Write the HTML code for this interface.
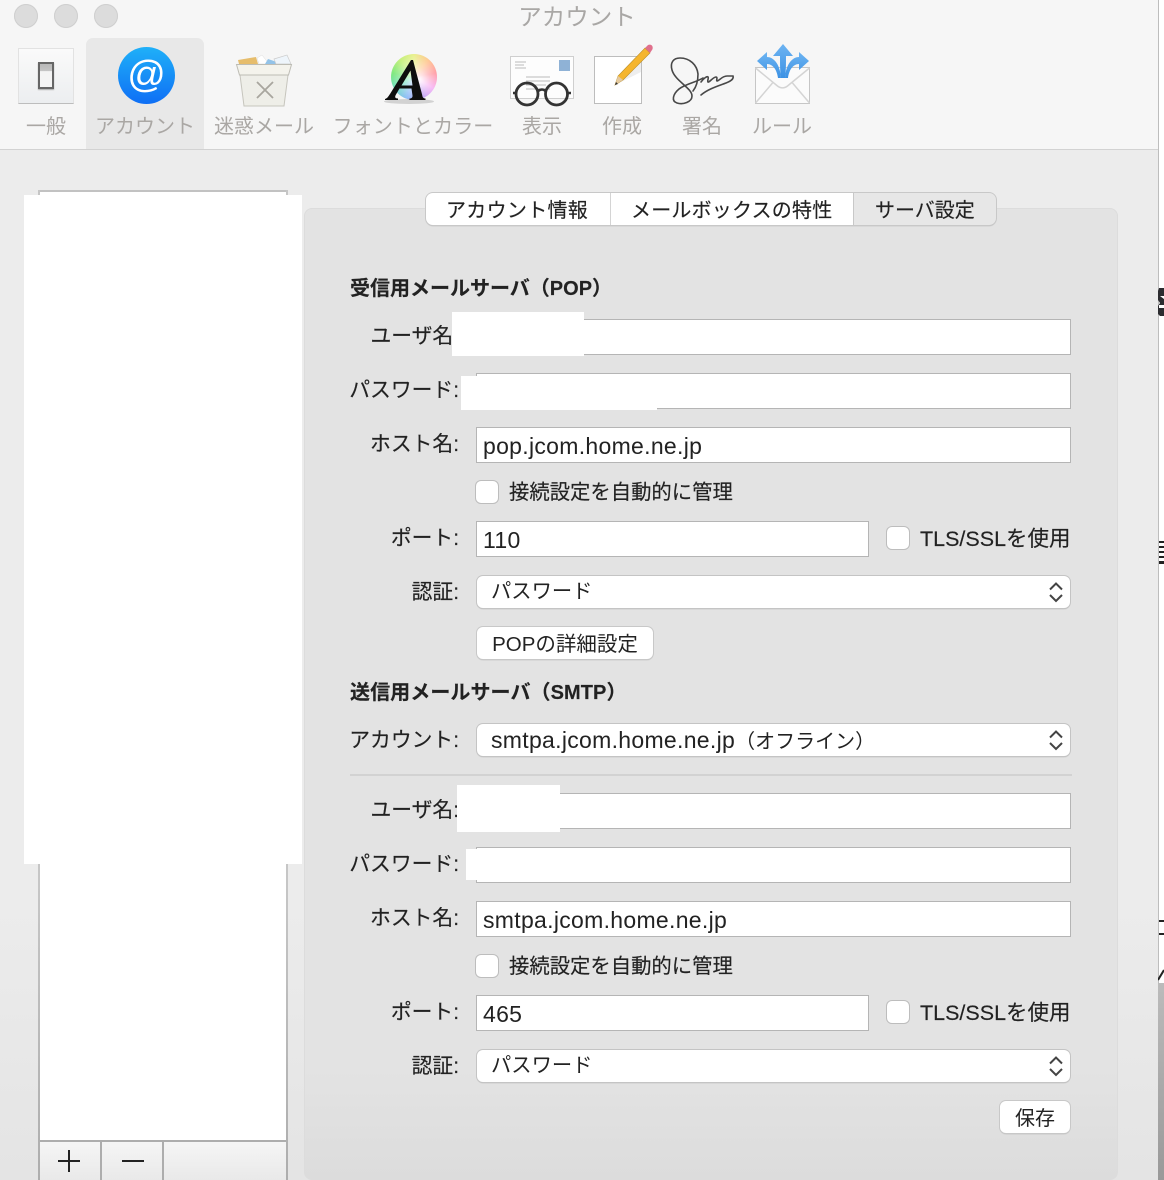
<!DOCTYPE html>
<html lang="ja"><head><meta charset="utf-8"><title>アカウント</title>
<style>
html,body{margin:0;padding:0;width:1164px;height:1180px;overflow:hidden}
body{position:relative;background:#fff;font-family:"Liberation Sans","Noto Sans CJK JP",sans-serif;color:#222}
#page{position:absolute;left:0;top:0;width:1164px;height:1180px;overflow:hidden}
div,svg{position:absolute}
.t{white-space:nowrap;font-size:20px;line-height:30px;height:30px;-webkit-text-stroke:.15px #222}
.r{text-align:right;font-size:20.800px}
.tb{color:#aaa7a4;font-size:20px;line-height:30px;height:30px;white-space:nowrap;text-align:center;top:112px}
.in{background:#fff;border:1px solid #b5b5b5;box-sizing:border-box;height:36px;left:476px;font-size:23px;letter-spacing:.3px;line-height:36px;padding-left:6px;color:#222;white-space:nowrap}
.sel{background:#fff;left:477px;width:593px;height:32px;border-radius:6px;box-shadow:0 0 0 1px #c4c4c4,0 1px 1px #a0a0a0;font-size:20.300px;line-height:33px;padding-left:14px;box-sizing:border-box;white-space:nowrap}
.sel span{font-size:23px;letter-spacing:.3px}
.btn{background:#fff;border-radius:6px;box-shadow:0 0 0 1px #c8c8c8,0 1px 1px #a0a0a0;text-align:center;white-space:nowrap;font-size:20px}
.cb{background:#fff;width:22px;height:22px;border-radius:5px;box-shadow:0 0 0 1px #bdbdbd;left:476px}
.w{background:#fff}
</style></head><body><div id="page">

<!-- window background -->
<div style="left:0;top:0;width:1158px;height:1180px;background:linear-gradient(#ececec 0,#ececec 900px,#e4e4e4 1180px)"></div>
<div style="left:1158px;top:0;width:1px;height:1180px;background:#bdbdbd"></div>
<div style="left:1158px;top:983px;width:6px;height:197px;background:linear-gradient(#bbb,#999)"></div>

<!-- toolbar -->
<div style="left:0;top:0;width:1158px;height:149px;background:#f6f6f6"></div>
<div style="left:0;top:149px;width:1158px;height:1px;background:#d2d2d2"></div>
<div style="left:14px;top:4px;width:24px;height:24px;border-radius:50%;background:#dcdcdc;box-shadow:inset 0 0 0 1px #cfcfcf"></div>
<div style="left:54px;top:4px;width:24px;height:24px;border-radius:50%;background:#dcdcdc;box-shadow:inset 0 0 0 1px #cfcfcf"></div>
<div style="left:94px;top:4px;width:24px;height:24px;border-radius:50%;background:#dcdcdc;box-shadow:inset 0 0 0 1px #cfcfcf"></div>
<div style="left:477px;top:2px;width:200px;text-align:center;font-size:23.500px;color:#a9a7a5;height:30px;line-height:30px;white-space:nowrap">アカウント</div>
<div style="left:86px;top:38px;width:118px;height:111px;background:#e8e8e8;border-radius:7px 7px 0 0"></div>

<!-- general icon -->
<div style="left:18px;top:48px;width:56px;height:56px;box-sizing:border-box;border:1px solid #e2e2e2;border-bottom-color:#bdbdbd;background:linear-gradient(#fafafa,#eceef0)"></div>
<div style="left:38px;top:62px;width:16px;height:27px;box-sizing:border-box;border:2px solid #666;background:linear-gradient(#b8b8b8 0,#c4c4c4 30%,#f4f4f4 32%,#f4f4f4 100%);box-shadow:0 1px 1px #aaa"></div>

<!-- @ icon -->
<div style="left:118px;top:47px;width:57px;height:57px;border-radius:50%;background:linear-gradient(#1fb0f8,#0f6ff5)"></div>
<svg style="left:118px;top:47px" width="57" height="57" viewBox="0 0 57 57"><text x="28.500" y="40" text-anchor="middle" font-family="Liberation Sans" font-size="38" fill="#fff">@</text></svg>

<!-- junk icon -->
<svg style="left:232px;top:50px" width="64" height="60" viewBox="0 0 64 60">
<path d="M6 10l18-3 2 7H7z" fill="#e6bd6c"/>
<path d="M25 8l5-3 7 9H27z" fill="#fff" stroke="#ddd" stroke-width=".5"/>
<path d="M33 14l3-5 9 3-1 2z" fill="#93c3e8"/>
<path d="M42 9l13-4 4 9H44z" fill="#eef5fb" stroke="#ccc" stroke-width=".7"/>
<path d="M8 25h48l-4 31H12z" fill="#eeeee8" stroke="#c6c5bd" stroke-width="1"/>
<path d="M4.500 14.500h55l-3 10.500h-49z" fill="#f4f3ec" stroke="#bdbcb4" stroke-width="1"/>
<path d="M25 32l16 16M41 32L25 48" stroke="#a8a69e" stroke-width="1.800" fill="none"/>
</svg>

<!-- fonts icon -->
<div style="left:391px;top:54px;width:46px;height:46px;border-radius:50%;background:radial-gradient(circle at 60% 55%,#fff 0,rgba(255,255,255,.5) 30%,rgba(255,255,255,0) 70%),conic-gradient(from 0deg,#e8f08a,#ffc080,#ff7f8a,#f59af0,#a78cf5,#7fb4f5,#70e0c0,#80e880,#c4f080,#e8f08a)"></div>
<div style="left:384px;top:99px;width:50px;height:5px;background:#666;border-radius:50%;opacity:.25"></div>
<svg style="left:380px;top:50px" width="60" height="56" viewBox="0 0 60 56"><path d="M5 50h13v-1.500c-3 0-3.500-1.500-2-4l3.500-6h12l1 7c.2 2-1 3-3 3V50h16v-1.500c-2 0-3-1-3.300-3.500L33 10h-2L10 44c-2 3-3 4.500-5 5z M21.500 35.500l9-15 2 15z" fill="#0e0e0e" fill-rule="evenodd"/></svg>

<!-- view icon -->
<div style="left:510px;top:56px;width:64px;height:43px;box-sizing:border-box;border:1px solid #cfcfcf;background:#fdfdfd"></div>
<div style="left:559px;top:60px;width:11px;height:11px;background:#8fb2d6"></div>
<svg style="left:510px;top:56px" width="64" height="40" viewBox="0 0 64 40"><path d="M5 6h11M5 9h9M5 12h11M16 21h24M16 25h24M16 29h20M16 33h24" stroke="#bbb" stroke-width="1" fill="none"/></svg>
<svg style="left:510px;top:78px" width="64" height="30" viewBox="0 0 64 30"><circle cx="17" cy="16" r="11" fill="none" stroke="#333" stroke-width="2.800"/><circle cx="46.500" cy="16" r="11" fill="none" stroke="#333" stroke-width="2.800"/><path d="M28 13c3-2 5-2 7.500 0M3 15H6M58 15h3" fill="none" stroke="#333" stroke-width="2.600"/></svg>

<!-- compose icon -->
<div style="left:594px;top:56px;width:48px;height:48px;box-sizing:border-box;border:1px solid #bdbdbd;background:#fff"></div>
<svg style="left:590px;top:40px" width="70" height="50" viewBox="0 0 70 50"><path d="M25 45l26-13V22z" fill="#eee"/><path d="M25 45l3-9L55 8l5 5-27 27z" fill="#f5b52e" stroke="#b98d26" stroke-width=".6"/><path d="M25 45l3-9 5 4z" fill="#e5caa0"/><path d="M55 8l3-3c2-1 4 0 4.500 1.500.5 1.500 0 3-.5 3.500l-2 3z" fill="#e0708c"/><path d="M25 45l1-3 2 2z" fill="#333"/></svg>

<!-- signature icon -->
<svg style="left:665px;top:52px" width="72" height="56" viewBox="0 0 72 56"><path d="M33 22C32 13 25 6 15 6 8 6 5 11 7 18 10 29 27 36 27 44 27 50 18 53 12 51 6 49 8 42 14 37 20 32 32 30 38 26M33 22c0 6-1 12-5 17M36 30c3-4 6-6 7-5 1 1-1 4 0 5 1 1 5-5 8-5 2 0 0 4 1 4 2 0 5-5 10-5 3 0 5 0 6 0 1 3-2 5-7 7-8 3-18 6-25 12" fill="none" stroke="#484848" stroke-width="1.600" stroke-linecap="round"/></svg>

<!-- rules icon -->
<svg style="left:752px;top:40px" width="62" height="66" viewBox="0 0 62 66">
<defs><linearGradient id="g" x1="0" y1="0" x2="0" y2="1"><stop offset="0" stop-color="#6db4f2"/><stop offset="1" stop-color="#3c92e4"/></linearGradient></defs>
<path d="M3.500 27.500h54v36h-54z" fill="#fbfbfb" stroke="#c6c6c6"/>
<path d="M3.500 28l22 18c3 2.500 7 2.500 10 0l22-18M3.500 63l17-20M57.500 63l-17-20" fill="none" stroke="#d4d4d4" stroke-width="1.500"/>
<path d="M31 4L21 16h7c0 8 0 16 1 22h4c1-6 1-14 1-22h7z" fill="url(#g)"/>
<path d="M5 21l10-9v5c6 0 13 6 14 21h-3c-1-8-5-14-11-14v6z" fill="url(#g)"/>
<path d="M57 21l-10-9v5c-6 0-13 6-14 21h3c1-8 5-14 11-14v6z" fill="url(#g)"/>
</svg>

<div class="tb" style="left:6px;width:80px">一般</div>
<div class="tb" style="left:86px;width:118px">アカウント</div>
<div class="tb" style="left:204px;width:120px">迷惑メール</div>
<div class="tb" style="left:322px;width:182px;letter-spacing:.1px">フォントとカラー</div>
<div class="tb" style="left:502px;width:80px">表示</div>
<div class="tb" style="left:582px;width:80px">作成</div>
<div class="tb" style="left:662px;width:80px">署名</div>
<div class="tb" style="left:742px;width:80px">ルール</div>

<!-- left list -->
<div style="left:38px;top:190px;width:250px;height:990px;box-sizing:border-box;border:2px solid transparent;border-top-color:#c2c2c2;border-bottom:0;background:#fff"></div>
<div style="left:38px;top:190px;width:2px;height:990px;background:linear-gradient(#c6c6c6 0,#c6c6c6 70%,#adadad 100%)"></div>
<div style="left:286px;top:190px;width:2px;height:990px;background:linear-gradient(#c6c6c6 0,#c6c6c6 70%,#adadad 100%)"></div>
<div style="left:40px;top:1140px;width:246px;height:2px;background:#adadad"></div>
<div style="left:40px;top:1142px;width:246px;height:38px;background:linear-gradient(#f5f5f5,#e9e9e9)"></div>
<div style="left:100px;top:1142px;width:2px;height:38px;background:#adadad"></div>
<div style="left:162px;top:1142px;width:2px;height:38px;background:#adadad"></div>
<div style="left:58px;top:1160px;width:22px;height:2px;background:#222"></div>
<div style="left:68px;top:1150px;width:2px;height:22px;background:#222"></div>
<div style="left:122px;top:1160px;width:22px;height:2px;background:#222"></div>
<div class="w" style="left:24px;top:195px;width:278px;height:669px"></div>

<!-- tab panel -->
<div style="left:304px;top:208px;width:814px;height:972px;box-sizing:border-box;border:1px solid #dcdcdc;border-radius:8px;background:linear-gradient(#e3e3e3 0,#e3e3e3 860px,#dcdcdc 972px)"></div>

<!-- tabs -->
<div class="btn" style="left:426px;top:193px;width:428px;height:32px;border-radius:7px 0 0 7px"></div>
<div style="left:854px;top:193px;width:142px;height:32px;background:#e7e7e7;border-radius:0 7px 7px 0;box-shadow:0 0 0 1px #c8c8c8,0 1px 1px #a0a0a0"></div>
<div style="left:610px;top:193px;width:1px;height:32px;background:#d4d4d4"></div>
<div class="t" style="left:446px;top:196px;letter-spacing:.3px">アカウント情報</div>
<div class="t" style="left:631px;top:196px;letter-spacing:.2px">メールボックスの特性</div>
<div class="t" style="left:875px;top:196px">サーバ設定</div>

<!-- POP section -->
<div class="t" style="left:350px;top:274px;font-weight:700">受信用メールサーバ（POP）</div>

<div class="t r" style="left:280px;width:179px;top:322px">ユーザ名:</div>
<div class="in" style="top:319px;width:595px"></div>
<div class="w" style="left:452px;top:312px;width:132px;height:44px"></div>

<div class="t r" style="left:280px;width:179px;top:376px">パスワード:</div>
<div class="in" style="top:373px;width:595px"></div>
<div class="w" style="left:461px;top:376px;width:196px;height:34px"></div>

<div class="t r" style="left:280px;width:179px;top:430px">ホスト名:</div>
<div class="in" style="top:427px;width:595px">pop.jcom.home.ne.jp</div>

<div class="cb" style="top:481px"></div>
<div class="t" style="left:509px;top:478px;font-size:20.350px">接続設定を自動的に管理</div>

<div class="t r" style="left:280px;width:179px;top:524px">ポート:</div>
<div class="in" style="top:521px;width:393px">110</div>
<div class="cb" style="left:887px;top:527px"></div>
<div class="t" style="left:920px;top:524px;font-size:21.500px">TLS/SSLを使用</div>

<div class="t r" style="left:280px;width:179px;top:578px">認証:</div>
<div class="sel" style="top:576px">パスワード</div>
<svg style="left:1048px;top:581px" width="16" height="22" viewBox="0 0 16 22"><path d="M2 8.500L8 2.500l6 6M2 14l6 6 6-6" fill="none" stroke="#444" stroke-width="2"/></svg>

<div class="btn" style="left:477px;top:627px;width:176px;height:32px;line-height:36px;font-size:20.500px">POPの詳細設定</div>

<!-- SMTP section -->
<div class="t" style="left:350px;top:678px;font-weight:700;letter-spacing:.08px">送信用メールサーバ（SMTP）</div>

<div class="t r" style="left:280px;width:179px;top:726px">アカウント:</div>
<div class="sel" style="top:724px;font-size:20px"><span>smtpa.jcom.home.ne.jp</span>（オフライン）</div>
<svg style="left:1048px;top:729px" width="16" height="22" viewBox="0 0 16 22"><path d="M2 8.500L8 2.500l6 6M2 14l6 6 6-6" fill="none" stroke="#444" stroke-width="2"/></svg>

<div style="left:350px;top:774px;width:722px;height:2px;background:#d2d2d2"></div>

<div class="t r" style="left:280px;width:179px;top:796px">ユーザ名:</div>
<div class="in" style="top:793px;width:595px"></div>
<div class="w" style="left:457px;top:785px;width:103px;height:47px"></div>

<div class="t r" style="left:280px;width:179px;top:850px">パスワード:</div>
<div class="in" style="top:847px;width:595px"></div>
<div class="w" style="left:466px;top:849px;width:11px;height:31px"></div>

<div class="t r" style="left:280px;width:179px;top:904px">ホスト名:</div>
<div class="in" style="top:901px;width:595px">smtpa.jcom.home.ne.jp</div>

<div class="cb" style="top:955px"></div>
<div class="t" style="left:509px;top:952px;font-size:20.350px">接続設定を自動的に管理</div>

<div class="t r" style="left:280px;width:179px;top:998px">ポート:</div>
<div class="in" style="top:995px;width:393px">465</div>
<div class="cb" style="left:887px;top:1001px"></div>
<div class="t" style="left:920px;top:998px;font-size:21.500px">TLS/SSLを使用</div>

<div class="t r" style="left:280px;width:179px;top:1052px">認証:</div>
<div class="sel" style="top:1050px">パスワード</div>
<svg style="left:1048px;top:1055px" width="16" height="22" viewBox="0 0 16 22"><path d="M2 8.500L8 2.500l6 6M2 14l6 6 6-6" fill="none" stroke="#444" stroke-width="2"/></svg>

<div class="btn" style="left:1000px;top:1101px;width:70px;height:32px;line-height:36px">保存</div>

<!-- right-edge fragments -->
<svg style="left:1158px;top:286px" width="6" height="32" viewBox="0 0 6 32"><path d="M1 2h5v8H2l4 3v6H1v3h5v8H2L0 28V20l2-3-2-3V5z" fill="#2c2c30"/></svg>
<div style="left:1159px;top:541px;width:5px;height:26px"><div style="left:0;top:0;width:5px;height:2px;background:#222"></div><div style="left:0;top:5px;width:5px;height:2px;background:#222"></div><div style="left:0;top:10px;width:5px;height:2px;background:#222"></div><div style="left:0;top:15px;width:5px;height:2px;background:#222"></div><div style="left:0;top:20px;width:5px;height:3px;background:#222"></div></div>
<div style="left:1159px;top:920px;width:5px;height:2px;background:#222"></div>
<div style="left:1159px;top:933px;width:5px;height:2px;background:#222"></div>
<svg style="left:1158px;top:966px" width="6" height="16" viewBox="0 0 6 16"><path d="M0 14L6 4" stroke="#222" stroke-width="2"/></svg>

</div></body></html>
